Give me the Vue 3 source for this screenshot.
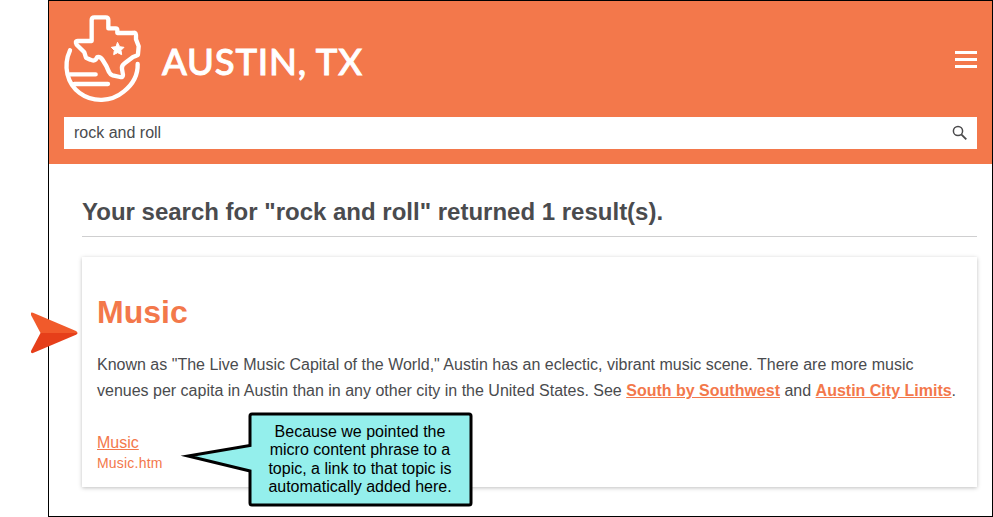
<script setup>
import { ref } from 'vue'

const query = ref('rock and roll')
</script>

<template>
  <div class="page">
    <div class="frame">
      <header class="header">
        <div class="brand-row">
          <div class="brand">
            <svg class="emblem" viewBox="60 30 252 288" fill="none" stroke="#fff" stroke-width="13" stroke-linecap="round" stroke-linejoin="round">
              <path d="M90 151 C68 199 82 252 119 279 C158 308 214 306 251 275 C280 252 294 224 293 192" />
              <path d="M155 123 V60 Q155 52 163 52 H197 Q205 52 205 60 V85 H227 Q232 85 232 90 V99 H278 Q287 95 288 105 V118 L296 139 L294 162 Q294 166 289 167 L279 171 L254 190 Q244 197 246 207 L249 225 Q249 233 240 231 L218 226 Q211 224 207 216 L199 198 L188 180 Q181 169 172 171 L167 179 Q161 184 151 179 L138 173 L133 157 L110 134 Q104 123 113 123 Z" />
              <path d="M90 223 H167 M103 252 H204" />
              <path class="star" d="M233 128 L239 140 L252 142 L243 151 L245 164 L233 158 L221 164 L223 151 L214 142 L227 140 Z" />
            </svg>
            <span class="brand-name">AUSTIN, TX</span>
          </div>
          <button class="menu" aria-label="Menu"><i></i><i></i><i></i></button>
        </div>
        <div class="search">
          <span>{{ query }}</span>
          <svg class="lens" viewBox="0 0 16 16" fill="none" stroke="#4a4a4c">
            <circle cx="6" cy="6" r="4.6" stroke-width="1.5" />
            <path d="M9.3 9.3 L14.3 14.3" stroke-width="1.9" />
          </svg>
        </div>
      </header>
      <main class="results">
        <h1>Your search for "{{ query }}" returned 1 result(s).</h1>
        <section class="card">
          <h2>Music</h2>
          <p>Known as "The Live Music Capital of the World," Austin has an eclectic, vibrant music scene. There are more music<br />venues per capita in Austin than in any other city in the United States. See <a>South by Southwest</a> and <a>Austin City Limits</a>.</p>
          <div class="topic">Music</div>
          <div class="path">Music.htm</div>
        </section>
      </main>
    </div>
    <svg class="pointer" viewBox="0 0 48 42">
      <path d="M1 1 Q1 0 3 .7 L46 19 Q47.5 20 47.5 21 H10.5 L1 3 Z" fill="#f15a2b" />
      <path d="M10.5 21 H47.5 Q47.5 22 46 22.7 L3 41 Q1 41.5 1 40 L1 39 Z" fill="#e63f1a" />
    </svg>
    <div class="callout">
      <svg class="bubble" viewBox="0 0 296 98">
        <path d="M72 4 H289 Q291 4 291 6 V93 Q291 95 289 95 H72 Q70 95 70 93 V61 L8 46 L70 35.5 V6 Q70 4 72 4 Z" fill="#94efec" stroke="#000" stroke-width="3" stroke-miterlimit="10" />
      </svg>
      <div class="note">Because we pointed the<br />micro content phrase to a<br />topic, a link to that topic is<br />automatically added here.</div>
    </div>
  </div>
</template>

<style>
body { background: #fff; }
</style>

<style scoped>
.page {
  position: relative;
  box-sizing: border-box;
  width: 993px;
  height: 517px;
  padding-left: 48px;
  overflow: hidden;
  font-family: "Liberation Sans", Arial, sans-serif;
  color: #4a4b4e;
}
.frame {
  box-sizing: border-box;
  width: 945px;
  height: 517px;
  border: 1px solid #000;
}
.header {
  box-sizing: border-box;
  height: 163px;
  padding: 9px 15px 0 11px;
  background: #f3784b;
}
.brand-row {
  display: flex;
  justify-content: space-between;
  height: 107px;
}
.brand { display: flex; }
.emblem { width: 84px; height: 96px; }
.star { fill: #fff; stroke-width: 3; }
.brand-name {
  margin: 28px 0 0 18px;
  font: 500 36.5px/47px Lato, sans-serif;
  letter-spacing: 0.8px;
  color: #fff;
  white-space: nowrap;
  -webkit-text-stroke: 0.9px #fff;
}
.menu {
  display: flex;
  flex-direction: column;
  gap: 4px;
  width: 22px;
  margin-top: 41px;
  padding: 0;
  border: 0;
  background: none;
}
.menu i { width: 22px; height: 3px; background: #fff; }
.search {
  box-sizing: border-box;
  display: flex;
  align-items: center;
  justify-content: space-between;
  height: 32px;
  margin-left: 4px;
  padding: 0 9px 0 10px;
  background: #fff;
  font-size: 16px;
}
.lens { width: 16px; height: 16px; }
.results { padding: 33px 15px 0 33px; }
h1 {
  margin: 0 0 20px;
  height: 39px;
  border-bottom: 1px solid #cfcfd0;
  font-size: 24px;
  line-height: 30px;
  white-space: nowrap;
}
.card {
  box-sizing: border-box;
  height: 230px;
  padding: 35px 15px 0;
  background: #fff;
  box-shadow: 0 1px 4px rgba(0, 0, 0, 0.25);
}
h2 {
  margin: 0 0 20px;
  color: #f3784b;
  font-size: 32px;
  line-height: 40px;
}
p {
  margin: 0 0 27px;
  font-size: 16px;
  line-height: 26px;
  white-space: nowrap;
}
a { color: #f3784b; font-weight: bold; text-decoration: underline; }
.topic { color: #f3784b; font-size: 16px; line-height: 24px; text-decoration: underline; }
.path { color: #f3784b; font-size: 14px; line-height: 16px; letter-spacing: 0.2px; }
.pointer { position: absolute; left: 30px; top: 312px; width: 48px; height: 42px; }
.callout { position: absolute; left: 180px; top: 410px; width: 296px; height: 98px; }
.bubble { position: absolute; width: 296px; height: 98px; }
.note {
  position: relative;
  padding: 13px 6px 0 70px;
  color: #000;
  font-size: 16px;
  line-height: 18.4px;
  text-align: center;
  white-space: nowrap;
}
</style>
